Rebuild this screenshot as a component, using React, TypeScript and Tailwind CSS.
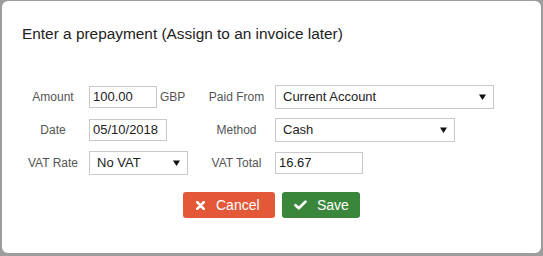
const font = { fontFamily: '"Liberation Sans", Arial, sans-serif' }

function Caret() {
  return (
    <svg width="7" height="6" viewBox="0 0 7 6" className="shrink-0">
      <path d="M0 0.5 L7 0.5 L3.5 6 Z" fill="#111" />
    </svg>
  )
}

function TextBox({ value, width }: { value: string; width: string }) {
  return (
    <div className={`${width} h-[22px] border border-[#c9c9c9] bg-white pl-[3px] text-[13px] leading-[20px] text-[#222]`}>
      {value}
    </div>
  )
}

function SelectBox({ value, width }: { value: string; width: string }) {
  return (
    <div className={`${width} flex h-[24px] items-center justify-between border border-[#c9c9c9] bg-white pl-[7px] pr-[7px] text-[13px] text-[#222]`}>
      <span>{value}</span>
      <Caret />
    </div>
  )
}

function Label({ text, width }: { text: string; width: string }) {
  return <div className={`${width} shrink-0 text-center text-[12px] leading-[24px] text-[#555]`}>{text}</div>
}

export default function App() {
  return (
    <div className="h-[256px] w-[543px] bg-[#9d9d9d] pt-px pr-[2px] pb-[3px] pl-[2px]" style={font}>
      <div className="h-full rounded-md bg-white">
        <h4 className="pt-[22px] pl-[20px] text-[15.4px] leading-[22px] text-[#222]">
          Enter a prepayment (Assign to an invoice later)
        </h4>

        <div className="mt-[40px] flex flex-col gap-[9px] pl-[20px]">
          <div className="flex h-[24px] items-center">
            <Label text="Amount" width="w-[62px]" />
            <div className="ml-[5px] flex w-[111px] items-center gap-[3px]">
              <TextBox value="100.00" width="w-[68px]" />
              <span className="text-[12px] text-[#555]">GBP</span>
            </div>
            <Label text="Paid From" width="w-[73px]" />
            <div className="ml-[2px]">
              <SelectBox value="Current Account" width="w-[219px]" />
            </div>
          </div>

          <div className="flex h-[24px] items-center">
            <Label text="Date" width="w-[62px]" />
            <div className="ml-[5px] w-[111px]">
              <TextBox value="05/10/2018" width="w-[78px]" />
            </div>
            <Label text="Method" width="w-[73px]" />
            <div className="ml-[2px]">
              <SelectBox value="Cash" width="w-[180px]" />
            </div>
          </div>

          <div className="flex h-[24px] items-center">
            <Label text="VAT Rate" width="w-[62px]" />
            <div className="ml-[5px] w-[111px]">
              <SelectBox value="No VAT" width="w-[99px]" />
            </div>
            <Label text="VAT Total" width="w-[73px]" />
            <div className="ml-[2px]">
              <TextBox value="16.67" width="w-[88px]" />
            </div>
          </div>
        </div>

        <div className="mt-[17px] flex justify-center gap-[7px]">
          <button className="flex h-[26px] w-[92px] items-center rounded-[3px] bg-[#e4583a] pl-[13px] text-[14px] text-white">
            <svg width="9" height="9" viewBox="0 0 9 9" className="mr-[11px]">
              <path d="M1.2 1.2 L7.8 7.8 M7.8 1.2 L1.2 7.8" stroke="#fff" strokeWidth="2.6" strokeLinecap="round" />
            </svg>
            Cancel
          </button>
          <button className="flex h-[26px] w-[78px] items-center rounded-[3px] bg-[#3a873c] pl-[12px] text-[14px] text-white">
            <svg width="13" height="10" viewBox="0 0 13 10" className="mr-[10px]">
              <path d="M1.5 5.2 L4.8 8.3 L11.5 1.6" fill="none" stroke="#fff" strokeWidth="2.7" strokeLinecap="round" strokeLinejoin="round" />
            </svg>
            Save
          </button>
        </div>
      </div>
    </div>
  )
}
